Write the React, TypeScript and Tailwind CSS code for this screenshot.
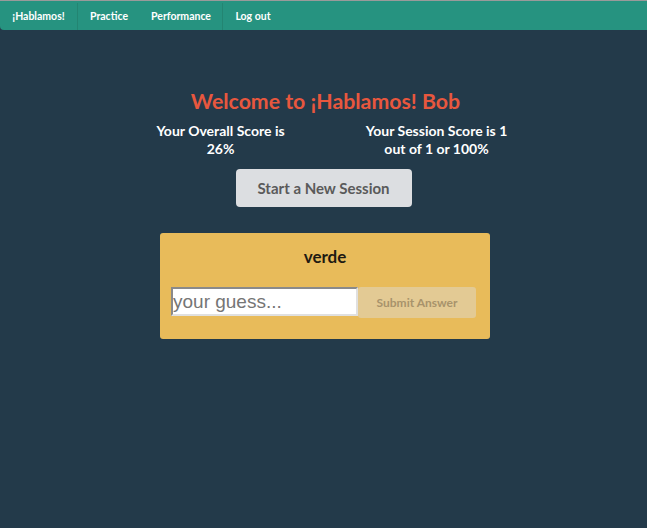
import React from "react";

export default function App() {
  return (
    <div className="min-h-[528px] w-full bg-[#233a4a] font-['Lato',sans-serif]">
      <div className="h-px bg-[#9a9a9a]" />
      <nav className="flex h-[29px] items-stretch rounded-bl-[4px] bg-[#269380] pt-[2px] text-[10.5px] font-bold text-white">
        <a className="flex w-[78px] items-center justify-center border-r border-[#238572]">¡Hablamos!</a>
        <a className="flex w-[62px] items-center justify-center">Practice</a>
        <a className="flex w-[83px] items-center justify-center border-r border-[#238572]">Performance</a>
        <a className="flex w-[60px] items-center justify-center">Log out</a>
      </nav>
      <div className="flex flex-col items-center">
        <h1 className="mt-[58px] pl-[4px] text-[21.3px] font-bold leading-[26px] text-[#e8573e]">
          Welcome to ¡Hablamos! Bob
        </h1>
        <div className="mt-[8px] flex gap-[66px] pl-[10px] text-[14px] font-bold leading-[18px] text-white">
          <div className="w-[150px] text-center">Your Overall Score is 26%</div>
          <div className="w-[150px] text-center">Your Session Score is 1 out of 1 or 100%</div>
        </div>
        <button className="mt-[11px] h-[38px] w-[176px] rounded-[4px] bg-[#dcdee1] text-[15px] font-bold text-[#5a5a5a]">
          Start a New Session
        </button>
        <div className="mt-[26px] ml-[3px] flex h-[106px] w-[330px] flex-col rounded-[3px] bg-[#e8bb5a] px-[11px]">
          <div className="mt-[13px] text-center text-[17px] font-bold leading-[22px] text-[#1f1a12]">verde</div>
          <div className="mt-[19px] flex items-start">
            <input
              placeholder="your guess..."
              className="h-[29px] w-[187px] border-2 border-t-[#8a8a8a] border-l-[#8a8a8a] border-r-[#e0e0e0] border-b-[#e0e0e0] bg-white px-0 font-['Liberation_Sans',Arial,sans-serif] text-[19px] text-black placeholder:text-[#757575]"
            />
            <button className="h-[31px] w-[118px] rounded-[3px] bg-[#e3ca94] text-[12px] font-bold text-[#a8936b]">
              Submit Answer
            </button>
          </div>
        </div>
      </div>
    </div>
  );
}
